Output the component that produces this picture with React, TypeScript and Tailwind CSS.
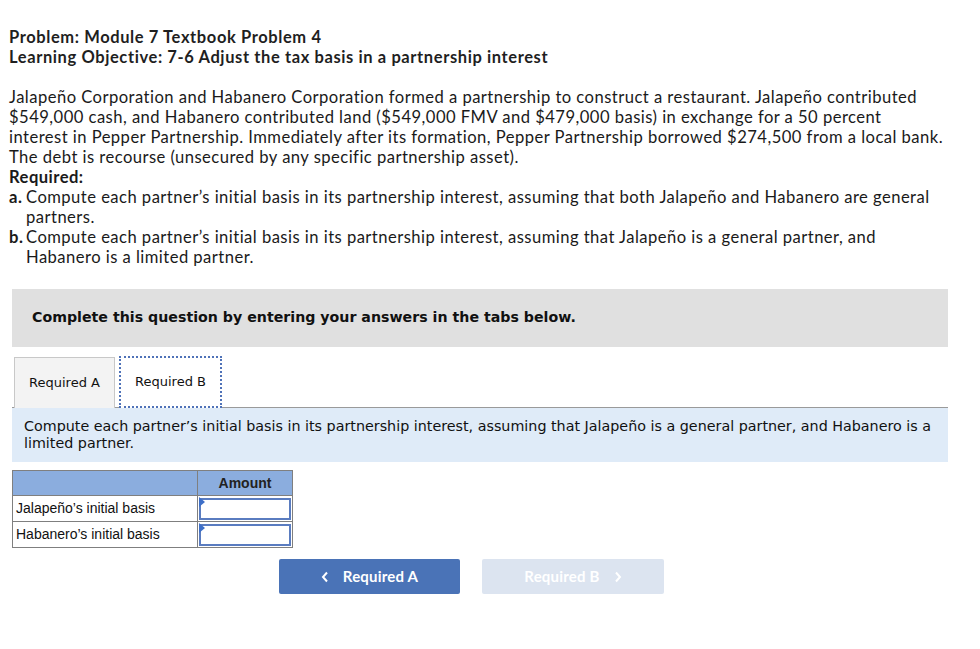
import React from "react";

const body = {
  intro: [
    "Jalapeño Corporation and Habanero Corporation formed a partnership to construct a restaurant. Jalapeño contributed",
    "$549,000 cash, and Habanero contributed land ($549,000 FMV and $479,000 basis) in exchange for a 50 percent",
    "interest in Pepper Partnership. Immediately after its formation, Pepper Partnership borrowed $274,500 from a local bank.",
    "The debt is recourse (unsecured by any specific partnership asset).",
  ],
  required: [
    {
      label: "a.",
      lines: [
        "Compute each partner’s initial basis in its partnership interest, assuming that both Jalapeño and Habanero are general",
        "partners.",
      ],
    },
    {
      label: "b.",
      lines: [
        "Compute each partner’s initial basis in its partnership interest, assuming that Jalapeño is a general partner, and",
        "Habanero is a limited partner.",
      ],
    },
  ],
};

const rows = ["Jalapeño’s initial basis", "Habanero’s initial basis"];

function AmountCell() {
  return (
    <td className="relative border border-[#7f7f7f] p-0">
      <div className="m-px h-[22px] border-2 border-[#5a7cc0] bg-white"></div>
      <span className="absolute left-px top-px h-0 w-0 border-y-[5px] border-l-[6px] border-y-transparent border-l-[#3d6fc8]"></span>
    </td>
  );
}

export default function App() {
  return (
    <div className="min-h-[649px] w-[980px] bg-white text-[#1a1a1a] [font-family:Lato,sans-serif]">
      <div className="px-[9px] pt-[27px]">
        {/* Heading */}
        <div className="text-[16.5px] font-bold leading-[20px] tracking-[0.6px] text-[#1f1f1f]">
          <div>Problem: Module 7 Textbook Problem 4</div>
          <div>Learning Objective: 7-6 Adjust the tax basis in a partnership interest</div>
        </div>

        {/* Problem text */}
        <div className="mt-[20px] text-[16.6px] leading-[20px] tracking-[0.46px]">
          {body.intro.map((line, i) => (
            <div key={i} className="whitespace-nowrap">
              {line}
            </div>
          ))}
          <div className="font-bold">Required:</div>
          {body.required.map((item) => (
            <div key={item.label} className="flex">
              <span className="w-[17px] font-bold">{item.label}</span>
              <div>
                {item.lines.map((line, i) => (
                  <div key={i} className="whitespace-nowrap">
                    {line}
                  </div>
                ))}
              </div>
            </div>
          ))}
        </div>
      </div>

      <div className="mx-[12px] mt-[22px] w-[936px] [font-family:'DejaVu_Sans',Verdana,sans-serif]">
        {/* Instructions */}
        <div className="flex h-[58px] items-center bg-[#e0e0e0] px-[20px] text-[14.2px] font-bold text-[#111]">
          Complete this question by entering your answers in the tabs below.
        </div>

        {/* Tabs */}
        <div className="mt-[9px] flex items-end border-b border-[#9a9a9a]">
          <div className="mb-[-1px] ml-[2px] flex h-[51px] w-[101px] items-center justify-center border border-b-0 border-[#c8c8c8] bg-[#f3f3f3] text-[13px] text-[#111]">
            Required A
          </div>
          <div className="mb-[-1px] ml-[4px] flex h-[52px] w-[103px] items-center justify-center border-2 border-dotted border-[#4f72b8] bg-white text-[13px] text-[#111]">
            Required B
          </div>
        </div>

        {/* Task */}
        <div className="bg-[#dfebf8] px-[12px] pb-[10px] pt-[10px] text-[14.3px] leading-[17px] text-[#111]">
          Compute each partner’s initial basis in its partnership interest, assuming that Jalapeño is a general partner, and Habanero is a limited partner.
        </div>

        {/* Answer table */}
        <table className="mt-[8px] border-collapse text-[14px] [font-family:'Liberation_Sans',Arial,sans-serif]">
          <thead>
            <tr className="h-[25px] bg-[#8badde]">
              <th className="w-[185px] border border-[#7f7f7f]"></th>
              <th className="w-[95px] border border-[#7f7f7f] text-center text-[14px] font-bold text-[#222]">
                Amount
              </th>
            </tr>
          </thead>
          <tbody>
            {rows.map((r) => (
              <tr key={r} className="h-[26px]">
                <td className="border border-[#7f7f7f] px-[3px] text-[#111]">{r}</td>
                <AmountCell />
              </tr>
            ))}
          </tbody>
        </table>

        {/* Navigation */}
        <div className="mt-[11px] flex gap-[22px] pl-[267px] [font-family:Lato,sans-serif]">
          <button className="flex h-[35px] w-[181px] items-center justify-center gap-[14px] rounded-[2px] bg-[#4a73b7] text-[15px] font-bold tracking-[0.2px] text-white">
            <svg width="8" height="12" viewBox="0 0 8 12" fill="none">
              <path d="M6 1.5L2 6l4 4.5" stroke="white" strokeWidth="2" />
            </svg>
            Required A
          </button>
          <button className="flex h-[35px] w-[182px] items-center justify-center gap-[14px] rounded-[2px] bg-[#dce4f0] text-[15px] font-bold tracking-[0.2px] text-white">
            Required B
            <svg width="8" height="12" viewBox="0 0 8 12" fill="none">
              <path d="M2 1.5L6 6l-4 4.5" stroke="white" strokeWidth="2" />
            </svg>
          </button>
        </div>
      </div>
    </div>
  );
}
